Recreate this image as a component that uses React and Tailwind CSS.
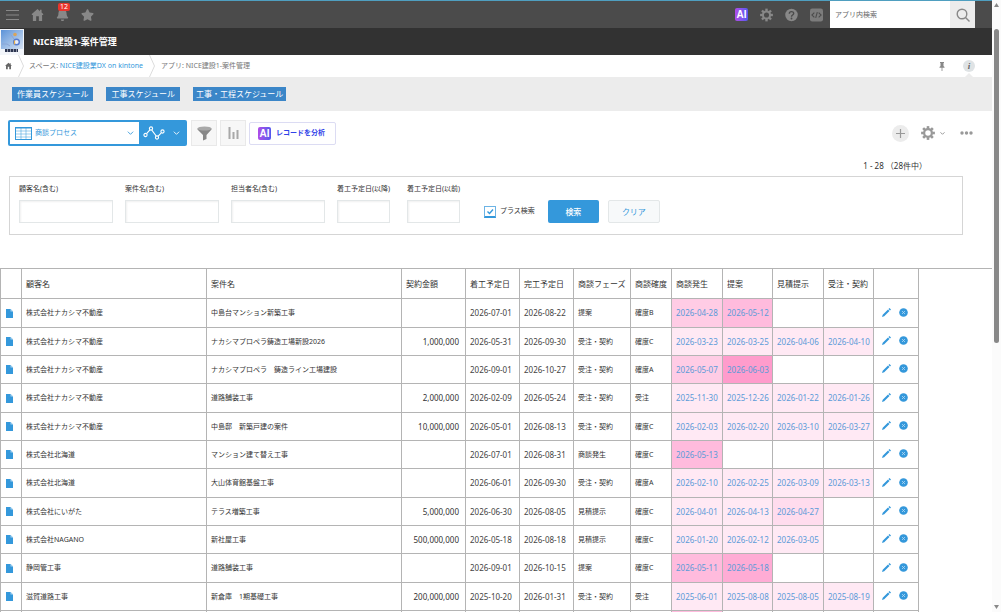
import React from 'react';
import { FaStar, FaBell } from 'react-icons/fa';

const columns = [
    { label: '', width: 'w-[22px]' },
    { label: '顧客名', width: 'w-[185px]' },
    { label: '案件名', width: 'w-[195px]' },
    { label: '契約金額', width: 'w-[64px]' },
    { label: '着工予定日', width: 'w-[54px]' },
    { label: '完工予定日', width: 'w-[54px]' },
    { label: '商談フェーズ', width: 'w-[57px]' },
    { label: '商談確度', width: 'w-[41px]' },
    { label: '商談発生', width: 'w-[51px]' },
    { label: '提案', width: 'w-[50px]' },
    { label: '見積提示', width: 'w-[51px]' },
    { label: '受注・契約', width: 'w-[50px]' },
    { label: '', width: 'w-[45px]' },
];

const shades = ['', 'bg-[#ffe9f4]', 'bg-[#ffdcee]', 'bg-[#ffcce5]', 'bg-[#ffbbdd]', 'bg-[#ffacd5]', 'bg-[#ff9ccc]'];

const records = [
    { customer: '株式会社ナカシマ不動産', name: '中島台マンション新築工事', amount: '', start: '2026-07-01', end: '2026-08-22', phase: '提案', rank: '確度B', steps: [['2026-04-28', 3], ['2026-05-12', 4], ['', 0], ['', 0]] },
    { customer: '株式会社ナカシマ不動産', name: 'ナカシマプロペラ鋳造工場新設2026', amount: '1,000,000', start: '2026-05-31', end: '2026-09-30', phase: '受注・契約', rank: '確度C', steps: [['2026-03-23', 1], ['2026-03-25', 1], ['2026-04-06', 1], ['2026-04-10', 1]] },
    { customer: '株式会社ナカシマ不動産', name: 'ナカシマプロペラ　鋳造ライン工場建設', amount: '', start: '2026-09-01', end: '2026-10-27', phase: '受注・契約', rank: '確度A', steps: [['2026-05-07', 3], ['2026-06-03', 6], ['', 0], ['', 0]] },
    { customer: '株式会社ナカシマ不動産', name: '道路舗装工事', amount: '2,000,000', start: '2026-02-09', end: '2026-05-24', phase: '受注・契約', rank: '受注', steps: [['2025-11-30', 1], ['2025-12-26', 1], ['2026-01-22', 1], ['2026-01-26', 1]] },
    { customer: '株式会社ナカシマ不動産', name: '中島邸　新築戸建の案件', amount: '10,000,000', start: '2026-05-01', end: '2026-08-13', phase: '受注・契約', rank: '確度C', steps: [['2026-02-03', 1], ['2026-02-20', 1], ['2026-03-10', 1], ['2026-03-27', 1]] },
    { customer: '株式会社北海道', name: 'マンション建て替え工事', amount: '', start: '2026-07-01', end: '2026-08-31', phase: '商談発生', rank: '確度C', steps: [['2026-05-13', 4], ['', 0], ['', 0], ['', 0]] },
    { customer: '株式会社北海道', name: '大山体育館基盤工事', amount: '', start: '2026-06-01', end: '2026-09-30', phase: '受注・契約', rank: '確度A', steps: [['2026-02-10', 1], ['2026-02-25', 1], ['2026-03-09', 1], ['2026-03-13', 1]] },
    { customer: '株式会社にいがた', name: 'テラス増築工事', amount: '5,000,000', start: '2026-06-30', end: '2026-08-05', phase: '見積提示', rank: '確度C', steps: [['2026-04-01', 1], ['2026-04-13', 1], ['2026-04-27', 2], ['', 0]] },
    { customer: '株式会社NAGANO', name: '新社屋工事', amount: '500,000,000', start: '2026-05-18', end: '2026-08-18', phase: '見積提示', rank: '確度C', steps: [['2026-01-20', 1], ['2026-02-12', 1], ['2026-03-05', 1], ['', 0]] },
    { customer: '静岡管工事', name: '道路舗装工事', amount: '', start: '2026-09-01', end: '2026-10-15', phase: '提案', rank: '確度C', steps: [['2026-05-11', 4], ['2026-05-18', 5], ['', 0], ['', 0]] },
    { customer: '滋賀道路工事', name: '新倉庫　1期基礎工事', amount: '200,000,000', start: '2025-10-20', end: '2026-01-31', phase: '受注・契約', rank: '受注', steps: [['2025-06-01', 1], ['2025-08-08', 1], ['2025-08-05', 1], ['2025-08-19', 1]] },
];

const Gear = ({ className }) => (
    <svg viewBox="0 0 24 24" className={className} fill="none">
        <circle cx="12" cy="12" r="6.6" stroke="currentColor" strokeWidth="3.8" />
        {[0, 45, 90, 135, 180, 225, 270, 315].map((angle) => (
            <rect key={angle} x="9.8" y="0.2" width="4.4" height="4.6" fill="currentColor" transform={`rotate(${angle} 12 12)`} />
        ))}
    </svg>
);

const HomeIcon = ({ className }) => (
    <svg viewBox="0 0 24 24" className={className} fill="currentColor">
        <path d="M12 1 1.5 10.2V12H3.5V23H9.5V14.5H14.5V23H20.5V12H22.5V10.2L19.5 7.5V2.5H16.5V5Z" />
    </svg>
);

const Chevron = ({ className }) => (
    <svg viewBox="0 0 10 6" className={className} fill="none" stroke="currentColor" strokeWidth="1.3">
        <path d="M1 1l4 4 4-4" />
    </svg>
);

const AiIcon = () => (
    <span className="flex h-[13px] w-[13px] items-center justify-center rounded-[2px] bg-linear-to-r from-[#b04be8] to-[#5158ee] font-['Liberation_Sans'] text-[10px] leading-[13px] font-bold text-white">
        AI
    </span>
);

const Separator = () => (
    <svg viewBox="0 0 6 22" className="h-[22px] w-[6px]" fill="none" stroke="#dcdcdc" strokeWidth="1">
        <path d="M0.5 0 5.5 11 0.5 22" />
    </svg>
);

const Field = ({ id, label, width, input }) => (
    <div className={width}>
        <label htmlFor={id} className="mb-[6px] block h-[10px] text-[7px] leading-[10px] whitespace-nowrap">{label}</label>
        <input id={id} type="text" className={`${input} block h-[23px] border border-[#e3e7e8] bg-white px-1 text-[8px] shadow-[inset_1px_1px_2px_#f0f0f0] outline-none`} />
    </div>
);

const Header = () => (
    <header>
        {/* Global bar */}
        <div className="flex h-7 items-center border-t border-[#4f9fc0] bg-[#4b4b4b] text-[#888888]">
            <nav className="flex items-center gap-3 pl-[6px]">
                <button aria-label="メニュー">
                    <svg viewBox="0 0 13 12" className="h-3 w-[13px]" stroke="currentColor" strokeWidth="1.2">
                        <path d="M0 1.5h13M0 6h13M0 10.5h13" />
                    </svg>
                </button>
                <button aria-label="ホーム"><HomeIcon className="h-[14px] w-[13px]" /></button>
                <button aria-label="通知" className="relative">
                    <FaBell className="h-[13px] w-[13px]" />
                    <span className="absolute -top-[5px] left-[2px] h-[8px] w-[12px] rounded-[2px] bg-[#e8352c] text-center text-[7px] leading-[8px] text-white">12</span>
                </button>
                <button aria-label="お気に入り"><FaStar className="h-[14px] w-[13px]" /></button>
            </nav>
            <div className="ml-auto flex items-center gap-3 pr-[7px]">
                <button aria-label="AI"><AiIcon /></button>
                <button aria-label="設定"><Gear className="h-[14px] w-[13px]" /></button>
                <button aria-label="ヘルプ">
                    <svg viewBox="0 0 24 24" className="h-[14px] w-[13px]">
                        <circle cx="12" cy="12" r="11.5" fill="currentColor" />
                        <path d="M8 9.5C8 4.5 16 4.5 16 9.2 16 12 12 12 12 15" fill="none" stroke="#4b4b4b" strokeWidth="2.6" />
                        <circle cx="12" cy="18.5" r="1.7" fill="#4b4b4b" />
                    </svg>
                </button>
                <button aria-label="開発者ツール">
                    <svg viewBox="0 0 24 24" className="h-[14px] w-[13px]">
                        <rect width="24" height="24" rx="4" fill="#7c7c7c" />
                        <path d="M8 7.5 3.5 12 8 16.5M16 7.5 20.5 12 16 16.5M13.5 6.5 10.5 17.5" fill="none" stroke="#4b4b4b" strokeWidth="2" />
                    </svg>
                </button>
            </div>
            <form className="mr-[17px] flex h-full">
                <input type="search" aria-label="アプリ内検索" placeholder="アプリ内検索" className="h-full w-[120px] bg-white px-[5px] text-[7px] text-[#333] outline-none placeholder:text-[#666]" />
                <button type="button" aria-label="検索" className="flex h-full w-[25px] items-center justify-center bg-[#ececec]">
                    <svg viewBox="0 0 14 14" className="h-[14px] w-[14px]" fill="none" stroke="#888888" strokeWidth="1.4">
                        <circle cx="6" cy="6" r="4.8" />
                        <path d="M9.5 9.5 13.5 13.5" />
                    </svg>
                </button>
            </form>
        </div>

        {/* App title */}
        <div className="flex h-[27px] items-center bg-[#323232]">
            <svg viewBox="0 0 24 26" className="h-[26px] w-6">
                <defs>
                    <linearGradient id="thumb" x1="0" y1="0" x2="1" y2="1">
                        <stop offset="0" stopColor="#5b92d8" />
                        <stop offset="1" stopColor="#d5e2f3" />
                    </linearGradient>
                </defs>
                <rect width="24" height="26" fill="#f2f5fa" />
                <rect x="1" y="1" width="22" height="19" fill="url(#thumb)" />
                <path d="M2 15h5l3 2M11 6l3 4" stroke="#8aa5d6" fill="none" />
                <circle cx="15" cy="5.5" r="1.8" fill="#d9a45c" />
                <circle cx="16.5" cy="13" r="2.8" fill="#e9eef8" stroke="#557bd0" strokeWidth="1.4" />
                <path d="M14.5 11.5v4" stroke="#e7b04d" strokeWidth="1.2" />
                <path d="M5 21.5h13" stroke="#2c3550" strokeWidth="3" strokeDasharray="2.5 0.5" />
            </svg>
            <h1 className="ml-[9px] text-[9px] leading-3 font-bold text-white">NICE建設1-案件管理</h1>
        </div>

        {/* Breadcrumbs */}
        <div className="flex h-[22px] items-center bg-white text-[7px] text-[#777]">
            <a href="#" aria-label="ホーム" className="ml-[5px] mr-[6px]"><HomeIcon className="h-2 w-[7px] text-[#666]" /></a>
            <Separator />
            <span className="mr-[6px] ml-[5px]">スペース: <a href="#" className="text-[#3498db]">NICE建設業DX on kintone</a></span>
            <Separator />
            <span className="ml-[6px]">アプリ: NICE建設1-案件管理</span>
            <button aria-label="ピン留め" className="ml-auto mr-[18px]">
                <svg viewBox="0 0 6 9" className="h-[9px] w-[6px]" fill="#888888">
                    <path d="M1 0h4v1H4.5v3L5.5 5v.8H3.4V9h-.8V5.8H.5V5l1-1V1H1z" />
                </svg>
            </button>
            <button aria-label="情報" className="relative mr-[17px] h-3 w-3 rounded-full bg-[#dfe3e5] font-['Liberation_Serif'] text-[9px] leading-3 font-bold text-[#666] italic">
                i
                <svg viewBox="0 0 8 4" className="absolute top-[13px] left-[2px] h-1 w-2" fill="#ececec"><path d="M0 4 4 0l4 4z" /></svg>
            </button>
        </div>

        {/* Announcement links */}
        <nav className="flex h-[34px] items-center gap-[13px] bg-[#ececec] pl-3 text-[8px] leading-[14px] text-white">
            <a href="#" className="bg-[#3b86c8] px-[5px]">作業員スケジュール</a>
            <a href="#" className="bg-[#3b86c8] px-[5px]">工事スケジュール</a>
            <a href="#" className="bg-[#3b86c8] px-[3px]">工事・工程スケジュール</a>
        </nav>
    </header>
);

const Toolbar = () => (
    <div className="flex h-[26px] items-center pl-2">
        <div className="flex h-full items-center rounded-[2px] bg-[#3498db] p-[2px]">
            <div className="flex h-full w-[129px] items-center bg-white pl-[5px] text-[#3498db]">
                <svg viewBox="0 0 17 13" className="h-[13px] w-[17px]" fill="none" stroke="currentColor" strokeWidth="1">
                    <rect x="0.5" y="0.5" width="16" height="12" />
                    <path d="M0.5 1.5h16M0.5 4h16M0.5 7h16M0.5 10h16M6 1v12M11 1v12" strokeWidth="0.5" />
                </svg>
                <select aria-label="一覧" className="ml-[3px] flex-1 appearance-none bg-transparent text-[7px] outline-none">
                    <option>商談プロセス</option>
                </select>
                <Chevron className="pointer-events-none mr-[5px] h-1 w-[7px]" />
            </div>
            <button aria-label="グラフ" className="flex h-full w-[46px] items-center justify-between pr-[5px] pl-1 text-white">
                <svg viewBox="0 0 22 14" className="h-[14px] w-[22px]" fill="none" stroke="currentColor" strokeWidth="1.1">
                    <circle cx="2.5" cy="9" r="1.6" />
                    <circle cx="8" cy="2.5" r="1.6" />
                    <circle cx="14" cy="11.5" r="1.6" />
                    <circle cx="19.5" cy="5.5" r="1.6" />
                    <path d="M3.6 7.7 6.9 3.8M8.8 4.1 13.2 10M15.2 10.2 18.3 6.8" />
                </svg>
                <Chevron className="h-1 w-[7px]" />
            </button>
        </div>
        <button aria-label="絞り込む" className="ml-1 flex h-[26px] w-[26px] items-center justify-center border border-[#e9e9e9] bg-[#f7f7f7]">
            <svg viewBox="0 0 15 15" className="h-[15px] w-[15px]">
                <path d="M0.5 2.5v1L6 9v5.5L9.5 13V9l5-5.5v-1z" fill="#888888" />
                <ellipse cx="7.5" cy="2.5" rx="7" ry="2" fill="#a8a8a8" />
            </svg>
        </button>
        <button aria-label="集計" className="ml-[3px] flex h-[26px] w-[26px] items-center justify-center border border-[#e9e9e9] bg-[#f7f7f7]">
            <svg viewBox="0 0 11 12" className="h-3 w-[11px]" fill="#a8a8a8">
                <path d="M0.5 0H2.5v12H.5zM4.5 5H6.5v7H4.5zM8.5 3h2v9h-2z" />
            </svg>
        </button>
        <button className="ml-[3px] flex h-[23px] w-[87px] items-center gap-[5px] rounded-[2px] border border-[#dcdcf3] bg-white pl-2 text-[7px] font-bold whitespace-nowrap text-[#3043e8]">
            <AiIcon />
            レコードを分析
        </button>
        <div className="mr-[19px] ml-auto flex items-center text-[#999999]">
            <button aria-label="レコードを追加" className="flex h-[17px] w-[17px] items-center justify-center rounded-full bg-[#ececec]">
                <svg viewBox="0 0 9 9" className="h-[9px] w-[9px]" stroke="currentColor" strokeWidth="1.2"><path d="M4.5 0v9M0 4.5h9" /></svg>
            </button>
            <button aria-label="アプリの設定" className="ml-3 flex items-center gap-[5px]">
                <Gear className="h-[14px] w-[14px]" />
                <svg viewBox="0 0 5 3" className="h-[3px] w-[5px]" fill="none" stroke="currentColor"><path d="M0.5 0.3 2.5 2.3 4.5 0.3" /></svg>
            </button>
            <button aria-label="オプション" className="ml-[15px]">
                <svg viewBox="0 0 13 4" className="h-1 w-[13px]" fill="currentColor"><circle cx="2" cy="2" r="1.7" /><circle cx="6.5" cy="2" r="1.7" /><circle cx="11" cy="2" r="1.7" /></svg>
            </button>
        </div>
    </div>
);

const SearchForm = () => (
    <form className="mt-1 mr-[29px] ml-[9px] flex items-end gap-3 border border-[#d5d5d5] px-[9px] pt-[7px] pb-[11px]">
        <Field id="customer" label="顧客名(含む)" width="w-[94px]" input="w-full" />
        <Field id="project" label="案件名(含む)" width="w-[94px]" input="w-full" />
        <Field id="staff" label="担当者名(含む)" width="w-[94px]" input="w-full" />
        <Field id="from" label="着工予定日(以降)" width="w-[58px]" input="w-[53px]" />
        <Field id="to" label="着工予定日(以前)" width="w-[58px]" input="w-[53px]" />
        <div className="ml-[7px] flex h-[23px] items-center">
            <label className="relative flex items-center gap-1 text-[7px] whitespace-nowrap">
                <input type="checkbox" defaultChecked className="h-3 w-3 appearance-none border border-b-2 border-[#6db4e5] border-b-[#3498db] bg-white" />
                <svg viewBox="0 0 8 8" className="pointer-events-none absolute left-[2px] h-2 w-2" fill="none" stroke="#3498db" strokeWidth="1.4"><path d="M1.500 3.500 3.500 5.500 7 1.500" /></svg>
                プラス検索
            </label>
            <button type="button" className="ml-[13px] h-[23px] w-[51px] rounded-[2px] bg-[#3498db] text-[8px] font-medium text-white">検索</button>
            <button type="button" className="ml-[9px] h-[23px] w-[52px] rounded-[2px] border border-[#e3e7e8] bg-[#f7f9fa] text-[8px] text-[#3498db]">クリア</button>
        </div>
    </form>
);

const RecordTable = () => (
    <div className="mt-[33px] border-t border-[#b4b4b4]">
        <table className="w-[919px] table-fixed border-separate border-spacing-0 text-left text-[7px] leading-[10px] whitespace-nowrap text-[#333] [&_td]:border-r [&_td]:border-b [&_td]:border-[#b4b4b4] [&_td]:py-0 [&_td:first-child]:border-l [&_th]:border-r [&_th]:border-b [&_th]:border-[#b4b4b4] [&_th:first-child]:border-l">
            <thead>
                <tr className="h-[30px] text-[8px]">
                    {columns.map((col, i) => (
                        <th key={i} className={`${col.width} py-0 pl-1 font-normal`}>{col.label}</th>
                    ))}
                </tr>
            </thead>
            <tbody className="[&>tr]:h-7 [&>tr:nth-child(3n+1)]:h-[29px]">
                {records.map((row, i) => (
                    <tr key={i}>
                        <td className="pl-[5px]">
                            <a href="#" aria-label="レコードの詳細">
                                <svg viewBox="0 0 7 9" className="h-[9px] w-[7px]">
                                    <path d="M0 0h4.5L7 2.5V9H0z" fill="#3498db" />
                                    <path d="M4.5 0v2.5H7z" fill="#a5d1f0" />
                                </svg>
                            </a>
                        </td>
                        <td className="pl-1">{row.customer}</td>
                        <td className="pl-1">{row.name}</td>
                        <td className="pr-[6px] text-right text-[8px]">{row.amount}</td>
                        <td className="pl-1 text-[8px] text-[#444]">{row.start}</td>
                        <td className="pl-1 text-[8px] text-[#444]">{row.end}</td>
                        <td className="pl-1">{row.phase}</td>
                        <td className="pl-1">{row.rank}</td>
                        {row.steps.map(([date, level], j) => (
                            <td key={j} className={`${shades[level]} pl-1 text-[8px] text-[#5b9bd8]`}>{date}</td>
                        ))}
                        <td className="pb-[2px]! pl-2">
                            <div className="flex items-center gap-2">
                                <button aria-label="編集">
                                    <svg viewBox="0 0 9 9" className="h-[9px] w-[9px]" fill="#3498db">
                                        <path d="M0 9 .7 6.7 6 1.5 7.5 3 2.2 8.3zM6.5 1 7.5 0 9 1.5 8 2.5z" />
                                    </svg>
                                </button>
                                <button aria-label="削除">
                                    <svg viewBox="0 0 9 9" className="h-[9px] w-[9px]">
                                        <circle cx="4.5" cy="4.5" r="4.3" fill="#3498db" />
                                        <path d="M3 3l3 3M6 3 3 6" stroke="#b5daf4" strokeWidth="0.8" />
                                    </svg>
                                </button>
                            </div>
                        </td>
                    </tr>
                ))}
                <tr>
                    {columns.map((col, i) => (
                        <td key={i} className={i === 8 ? 'bg-[#ffbbdd]' : ''}></td>
                    ))}
                </tr>
            </tbody>
        </table>
    </div>
);

const App = () => {
    return (
        <div className="flex h-screen overflow-hidden bg-white font-['Noto_Sans','Noto_Sans_CJK_JP',sans-serif] text-[#333]">
            <div className="min-w-0 flex-1 overflow-hidden">
                <Header />
                <main className="pt-[9px]">
                    <Toolbar />
                    <p className="mt-[14px] mr-[65px] h-3 text-right text-[8px] leading-3">1 - 28 （28件中）</p>
                    <SearchForm />
                    <RecordTable />
                </main>
            </div>

            {/* Scrollbar */}
            <div className="flex w-[9px] flex-col items-center justify-between bg-[#fbfbfb] py-[3px]">
                <svg viewBox="0 0 5 4" className="h-1 w-[5px]" fill="#888888"><path d="M0 4 2.5 0 5 4z" /></svg>
                <div className="mt-[22px] mb-auto h-[314px] w-[5px] rounded-full bg-[#888888]"></div>
                <svg viewBox="0 0 5 4" className="h-1 w-[5px]" fill="#888888"><path d="M0 0 2.5 4 5 0z" /></svg>
            </div>
        </div>
    );
};

export default App;
